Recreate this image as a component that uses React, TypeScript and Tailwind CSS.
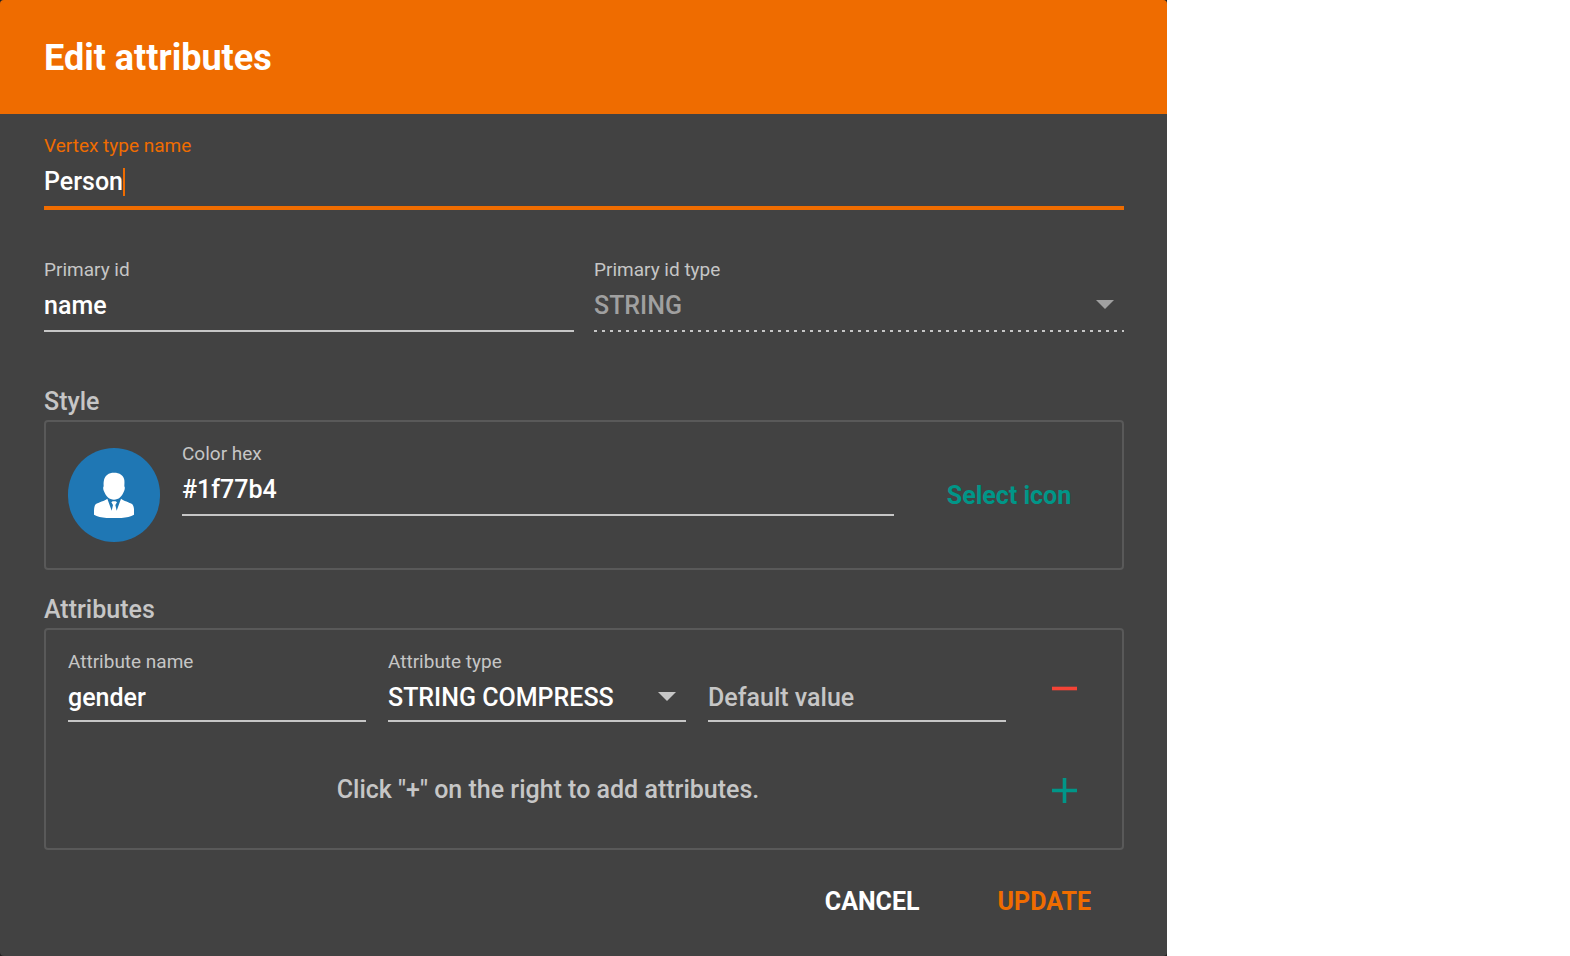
import { useState } from "react";
import type { ReactNode } from "react";

const control =
  "block w-full rounded-none border-0 bg-transparent p-0 text-[25px] leading-8 font-medium text-white outline-none appearance-none placeholder:text-[#c6c6c6] placeholder:opacity-100 disabled:text-[#a0a0a0] disabled:opacity-100";

type FieldProps = {
  id: string;
  label: string;
  labelClass?: string;
  line?: string;
  height?: string;
  children: ReactNode;
};

function Field({ id, label, labelClass = "text-[#c6c6c6]", line = "border-b-2 border-[#c6c6c6]", height = "h-[50px]", children }: FieldProps) {
  return (
    <div className="min-w-0">
      <label htmlFor={id} className={`block h-6 text-[19px] leading-6 font-normal ${labelClass}`}>
        {label}
      </label>
      <div className={`relative pt-2 ${height} ${line}`}>{children}</div>
    </div>
  );
}

function Arrow({ className }: { className: string }) {
  return (
    <svg className={`pointer-events-none absolute top-[18px] right-2.5 h-[9px] w-[18px] ${className}`} viewBox="0 0 18 9" fill="currentColor" aria-hidden="true">
      <path d="M0 0h18L9 9z" />
    </svg>
  );
}

function PersonIcon() {
  return (
    <svg className="h-[46px] w-10" viewBox="0 0 120 138" fill="#fff" aria-hidden="true">
      <path d="M60 2C77 2 89 10 91 24C92 32 91 38 91 43C94 46 92 56 89 60C84 73 74 83 60 83C46 83 36 73 31 60C28 56 26 46 29 43C29 38 28 32 30 24C33 10 44 2 60 2Z" />
      <path d="M40 80L53 116L57 99L52 91L56 88H65L69 91L64 99L68 116L81 80C88 87 107 90 115 97C121 104 121 120 120 128C106 136 84 139 60 139C36 139 14 136 0 128C0 120-1 104 5 97C13 90 33 87 40 80Z" />
    </svg>
  );
}

export default function App() {
  const [name, setName] = useState("Person");
  return (
    <main className="min-h-screen bg-white font-['Roboto',sans-serif] text-[25px] leading-8 font-medium">
      <div className="w-full max-w-[1167px] bg-[#212121]">
        <form
          className="flex min-h-screen flex-col overflow-hidden rounded-sm bg-[#424242]"
          onSubmit={(e) => e.preventDefault()}
        >
          <header className="bg-[#ef6c00] px-11 pt-[34px] pb-8">
            <h1 className="text-[36px] leading-[48px] font-bold text-white">Edit attributes</h1>
          </header>

          <div className="pt-5 pr-[43px] pl-11">
            <Field id="vertex" label="Vertex type name" labelClass="text-[#ef6c00]" line="border-b-4 border-[#ef6c00]" height="h-[52px]">
              <input id="vertex" className={`${control} caret-transparent`} value={name} onChange={(e) => setName(e.target.value)} />
              <span className="pointer-events-none absolute top-2.5 left-0 flex h-7" aria-hidden="true">
                <span className="invisible">{name}</span>
                <span className="h-7 w-0.5 bg-[#ef6c00]" />
              </span>
            </Field>

            <div className="mt-12 grid grid-cols-2 gap-5">
              <Field id="pid" label="Primary id">
                <input id="pid" className={control} defaultValue="name" />
              </Field>
              <Field
                id="pidtype"
                label="Primary id type"
                line="bg-[repeating-linear-gradient(to_right,#c6c6c6_0_3px,transparent_3px_8px)] bg-[length:100%_2px] bg-bottom bg-no-repeat"
              >
                <select id="pidtype" className={control} disabled>
                  <option>STRING</option>
                </select>
                <Arrow className="text-[#a0a0a0]" />
              </Field>
            </div>

            <h2 className="mt-[54px] text-[#c6c6c6]">Style</h2>
            <section className="mt-0.5 flex h-[150px] items-start rounded-sm border-2 border-[#595959] px-[22px] pt-5">
              <div className="mt-1.5 flex h-[94px] w-[92px] shrink-0 items-center justify-center rounded-full bg-[#1f77b4]">
                <PersonIcon />
              </div>
              <div className="ml-[22px] min-w-0 flex-1">
                <Field id="hex" label="Color hex">
                  <input id="hex" className={control} defaultValue="#1f77b4" />
                </Field>
              </div>
              <button type="button" className="mt-[38px] w-[206px] pl-6 font-bold text-[#009688]">
                Select icon
              </button>
            </section>

            <h2 className="mt-6 text-[#c6c6c6]">Attributes</h2>
            <section className="mt-0.5 h-[222px] rounded-sm border-2 border-[#595959] pt-5 pr-[21px] pl-[22px]">
              <div className="grid grid-cols-[1fr_1fr_1fr_73px] gap-x-[22px]">
                <Field id="aname" label="Attribute name" height="h-12">
                  <input id="aname" className={control} defaultValue="gender" />
                </Field>
                <Field id="atype" label="Attribute type" height="h-12">
                  <select id="atype" className={control}>
                    <option>STRING COMPRESS</option>
                  </select>
                  <Arrow className="text-[#c6c6c6]" />
                </Field>
                <div className="pt-6">
                  <div className="h-12 border-b-2 border-[#c6c6c6] pt-2">
                    <input aria-label="Default value" placeholder="Default value" className={control} />
                  </div>
                </div>
                <button type="button" aria-label="Remove attribute" className="flex h-[77px] items-center justify-center text-[#f44336]">
                  <svg className="h-[25px] w-[25px]" viewBox="0 0 25 25" stroke="currentColor" strokeWidth="3.6" aria-hidden="true">
                    <path d="M0 12.5h25" />
                  </svg>
                </button>
              </div>
              <div className="mt-[47px] grid grid-cols-[1fr_73px] items-center">
                <p className="text-center text-[#c6c6c6]">Click "+" on the right to add attributes.</p>
                <button type="button" aria-label="Add attribute" className="flex h-8 items-center justify-center text-[#009688]">
                  <svg className="h-[25px] w-[25px]" viewBox="0 0 25 25" stroke="currentColor" strokeWidth="3.6" aria-hidden="true">
                    <path d="M0 12.5h25M12.5 0v25" />
                  </svg>
                </button>
              </div>
            </section>
          </div>

          <footer className="flex justify-end gap-3.5 pt-9 pr-11 pb-6 pl-11 font-bold">
            <button type="button" className="px-8 text-white">CANCEL</button>
            <button type="submit" className="px-8 text-[#ef6c00]">UPDATE</button>
          </footer>
        </form>
      </div>
    </main>
  );
}
